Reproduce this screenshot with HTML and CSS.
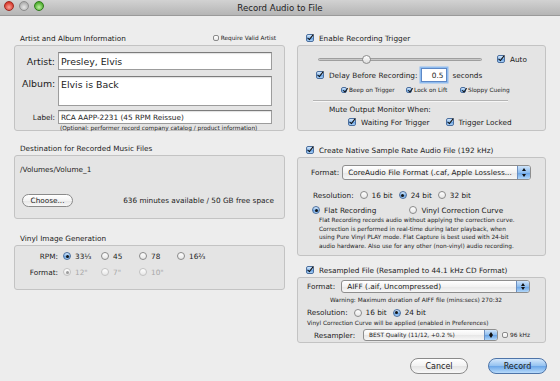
FILE: index.html
```html
<!DOCTYPE html>
<html lang="en">
<head>
    <meta charset="UTF-8">
    <meta name="viewport" content="width=device-width, initial-scale=1.0">
    <title>Record Audio to File</title>
    <link rel="stylesheet" href="styles.css">
</head>
<body>
<div class="window">
    <div class="titlebar">
        <div class="lights">
            <span class="light red"></span>
            <span class="light idle"></span>
            <span class="light green"></span>
        </div>
        <div class="title">Record Audio to File</div>
        <div></div>
    </div>

    <div class="content">
        <!-- left column -->
        <div class="column">
            <div class="group-head">
                <span>Artist and Album Information</span>
                <span class="check tiny"><span class="cb off"></span>Require Valid Artist</span>
            </div>
            <div class="box artist-box">
                <div class="field-row">
                    <span class="field-label big">Artist:</span>
                    <div class="field big">Presley, Elvis</div>
                </div>
                <div class="field-row area-row">
                    <span class="field-label big">Album:</span>
                    <div class="field big area">Elvis is Back</div>
                </div>
                <div class="field-row label-row">
                    <span class="field-label">Label:</span>
                    <div class="field small">RCA AAPP-2231 (45 RPM Reissue)</div>
                </div>
                <div class="hint">(Optional: performer record company catalog / product information)</div>
            </div>

            <div class="group-head spaced">Destination for Recorded Music Files</div>
            <div class="box dest-box">
                <div class="path">/Volumes/Volume_1</div>
                <div class="dest-row">
                    <span class="pill">Choose...</span>
                    <span>636 minutes available / 50 GB free space</span>
                </div>
            </div>

            <div class="group-head spaced-more">Vinyl Image Generation</div>
            <div class="box vinyl-box">
                <span class="row-label">RPM:</span>
                <span class="radio"><span class="rb on"></span>33⅓</span>
                <span class="radio"><span class="rb"></span>45</span>
                <span class="radio"><span class="rb"></span>78</span>
                <span class="radio"><span class="rb"></span>16⅔</span>
                <span class="row-label">Format:</span>
                <span class="radio disabled"><span class="rb dot"></span>12"</span>
                <span class="radio disabled"><span class="rb"></span>7"</span>
                <span class="radio disabled"><span class="rb"></span>10"</span>
            </div>
        </div>

        <!-- right column -->
        <div class="column">
            <div class="group-head check-head">
                <span class="check"><span class="cb"></span>Enable Recording Trigger</span>
            </div>
            <div class="box trigger-box">
                <div class="slider-row">
                    <div class="slider"><span class="knob" style="left: 29%"></span></div>
                    <span class="check auto"><span class="cb"></span>Auto</span>
                </div>
                <div class="delay-row">
                    <span class="check"><span class="cb"></span>Delay Before Recording:</span>
                    <span class="num">0.5</span>
                    <span>seconds</span>
                </div>
                <div class="tiny-checks">
                    <span class="check tiny beep"><span class="cb"></span>Beep on Trigger</span>
                    <span class="check tiny lock"><span class="cb"></span>Lock on Lift</span>
                    <span class="check tiny"><span class="cb"></span>Sloppy Cueing</span>
                </div>
                <div class="sep"></div>
                <div class="mute-title">Mute Output Monitor When:</div>
                <div class="mute-row">
                    <span class="check"><span class="cb"></span>Waiting For Trigger</span>
                    <span class="check"><span class="cb"></span>Trigger Locked</span>
                </div>
            </div>

            <div class="group-head check-head spaced-more">
                <span class="check"><span class="cb"></span>Create Native Sample Rate Audio File (192 kHz)</span>
            </div>
            <div class="box native-box">
                <div class="format-row">
                    <span>Format:</span>
                    <div class="popup wide">
                        <span class="popup-value">CoreAudio File Format (.caf, Apple Lossless...</span>
                        <span class="stepper"></span>
                    </div>
                </div>
                <div class="res-row">
                    <span>Resolution:</span>
                    <span class="radio"><span class="rb"></span>16 bit</span>
                    <span class="radio"><span class="rb on"></span>24 bit</span>
                    <span class="radio"><span class="rb"></span>32 bit</span>
                </div>
                <div class="curve-row">
                    <span class="radio"><span class="rb on"></span>Flat Recording</span>
                    <span class="radio"><span class="rb"></span>Vinyl Correction Curve</span>
                </div>
                <p class="note">
                    Flat Recording records audio without applying the correction curve.<br>
                    Correction is performed in real-time during later playback, when<br>
                    using Pure Vinyl PLAY mode. Flat Capture is best used with 24-bit<br>
                    audio hardware. Also use for any other (non-vinyl) audio recording.
                </p>
            </div>

            <div class="group-head check-head spaced-less">
                <span class="check"><span class="cb"></span>Resampled File (Resampled to 44.1 kHz CD Format)</span>
            </div>
            <div class="box resample-box">
                <div class="format-row">
                    <span>Format:</span>
                    <div class="popup wide">
                        <span class="popup-value">AIFF (.aif, Uncompressed)</span>
                        <span class="stepper"></span>
                    </div>
                </div>
                <div class="tiny-line warning">Warning: Maximum duration of AIFF file (mins:secs) 270:32</div>
                <div class="res-row">
                    <span>Resolution:</span>
                    <span class="radio"><span class="rb"></span>16 bit</span>
                    <span class="radio"><span class="rb on"></span>24 bit</span>
                </div>
                <div class="tiny-line">Vinyl Correction Curve will be applied (enabled in Preferences)</div>
                <div class="resampler-row">
                    <span>Resampler:</span>
                    <div class="popup small-popup">
                        <span class="popup-value">BEST Quality (11/12, +0.2 %)</span>
                        <span class="stepper"></span>
                    </div>
                    <span class="check tiny"><span class="cb off"></span>96 kHz</span>
                </div>
            </div>

            <div class="buttons">
                <span class="button">Cancel</span>
                <span class="button default">Record</span>
            </div>
        </div>
    </div>
</div>
</body>
</html>
```

FILE: styles.css
```css
body {
    margin: 0;
    background: #ededed;
    font-family: "DejaVu Sans", sans-serif;
    font-size: 7.3px;
    color: #1c1c1c;
}
.window {
    width: 560px;
    height: 381px;
    overflow: hidden;
}

/* title bar */
.titlebar {
    height: 15px;
    display: grid;
    grid-template-columns: 1fr auto 1fr;
    align-items: center;
    background: linear-gradient(#d2d2d2, #b5b5b5);
    border-bottom: 1px solid #9a9a9a;
}
.lights {
    display: flex;
    gap: 5px;
    margin-left: 4px;
    margin-top: -3px;
}
.light {
    width: 10px;
    height: 10px;
    border-radius: 50%;
    box-sizing: border-box;
}
.light.red {
    background: radial-gradient(circle at 50% 65%, #f7a49a, #d8392c 70%);
    border: 1px solid #9d2a22;
}
.light.idle {
    background: radial-gradient(circle at 50% 65%, #e6e6e6, #b0b0b0 70%);
    border: 1px solid #8d8d8d;
}
.light.green {
    background: radial-gradient(circle at 50% 65%, #bff0a4, #4fae2e 70%);
    border: 1px solid #2f7a1c;
}
.title {
    font-size: 8.6px;
    color: #222;
}

/* layout */
.content {
    display: grid;
    grid-template-columns: 271px 249px;
    column-gap: 12px;
    padding: 15px 14px 0 14px;
}
.column {
    display: flex;
    flex-direction: column;
}
.group-head {
    height: 14px;
    display: flex;
    align-items: center;
    justify-content: space-between;
    padding: 0 9px 0 6px;
}
.group-head.check-head {
    padding-left: 9px;
}
.spaced { margin-top: 10px; }
.spaced-more { margin-top: 12px; }
.spaced-less { margin-top: 7px; }

.box {
    box-sizing: border-box;
    background: #e4e4e4;
    border: 1px solid #c3c3c3;
    border-radius: 3px;
}

/* checks and radios */
.check, .radio {
    display: inline-flex;
    align-items: center;
    white-space: nowrap;
}
.cb {
    position: relative;
    flex: none;
    width: 8px;
    height: 8px;
    box-sizing: border-box;
    margin-right: 5px;
    border: 1px solid #4b6f9f;
    border-radius: 2px;
    background: linear-gradient(#d7e9fc, #8bbbec 50%, #5f9be0 51%, #aed4f8);
}
.cb::after {
    content: "";
    position: absolute;
    left: 2px;
    top: -2px;
    width: 2px;
    height: 6px;
    border: solid #111;
    border-width: 0 1.6px 1.6px 0;
    transform: rotate(38deg);
}
.cb.off {
    border-color: #8a8a8a;
    background: linear-gradient(#ffffff, #e9e9e9);
}
.cb.off::after {
    display: none;
}
.tiny {
    font-size: 5.8px;
}
.tiny .cb {
    width: 6px;
    height: 6px;
    margin-right: 2px;
}
.tiny .cb::after {
    left: 1.5px;
    top: -1.5px;
    width: 1.5px;
    height: 4px;
    border-width: 0 1.2px 1.2px 0;
}
.rb {
    position: relative;
    flex: none;
    width: 8px;
    height: 8px;
    box-sizing: border-box;
    margin-right: 4px;
    border: 1px solid #8a8a8a;
    border-radius: 50%;
    background: linear-gradient(#ffffff, #e6e6e6);
}
.rb.on {
    border-color: #4b6f9f;
    background: linear-gradient(#d7e9fc, #8bbbec 50%, #5f9be0 51%, #aed4f8);
}
.rb.on::after, .rb.dot::after {
    content: "";
    position: absolute;
    left: 50%;
    top: 50%;
    width: 3px;
    height: 3px;
    margin: -1.5px 0 0 -1.5px;
    border-radius: 50%;
    background: #141414;
}
.radio.disabled {
    color: #a8a8a8;
}
.radio.disabled .rb {
    border-color: #c2c2c2;
}
.radio.disabled .rb.dot::after {
    background: #9c9c9c;
}

/* artist box */
.artist-box {
    height: 86px;
    padding: 6px 12px 0 7px;
}
.field-row {
    display: flex;
    align-items: center;
}
.field-label {
    flex: none;
    width: 33px;
    margin-right: 3px;
    text-align: right;
}
.big {
    font-size: 9.4px;
}
.field {
    flex: 1;
    box-sizing: border-box;
    height: 18px;
    padding-left: 2px;
    display: flex;
    align-items: center;
    background: #fff;
    border: 1px solid #9c9c9c;
    border-top-color: #7c7c7c;
    box-shadow: inset 0 1px 1px rgba(0, 0, 0, 0.12);
}
.area-row {
    align-items: flex-start;
    margin-top: 6px;
}
.area-row .field-label {
    padding-top: 2px;
}
.field.area {
    height: 30px;
    align-items: flex-start;
    padding-top: 2px;
}
.label-row {
    margin-top: 4px;
}
.field.small {
    height: 14px;
}
.hint {
    margin: 1px 0 0 38px;
    font-size: 5.8px;
    line-height: 7px;
}

/* destination */
.dest-box {
    height: 64px;
    padding: 9px 10px 0 5px;
}
.path {
    line-height: 9px;
}
.dest-row {
    margin-top: 20px;
    display: flex;
    justify-content: space-between;
    align-items: center;
}
.pill {
    margin-left: 2px;
    width: 51px;
    height: 13px;
    box-sizing: border-box;
    display: flex;
    align-items: center;
    justify-content: center;
    border: 1px solid #8a8a8a;
    border-radius: 7px;
    background: linear-gradient(#ffffff, #f3f3f3 50%, #e5e5e5 51%, #f8f8f8);
}

/* vinyl */
.vinyl-box {
    height: 45px;
    padding-top: 4px;
    display: grid;
    grid-template-columns: 44px repeat(4, 34px);
    grid-auto-rows: 12px;
    column-gap: 4px;
    row-gap: 4px;
    align-items: center;
}
.row-label {
    text-align: right;
    padding-right: 1px;
}

/* trigger */
.trigger-box {
    height: 86px;
    padding-top: 7px;
}
.slider-row {
    height: 12px;
    display: flex;
    align-items: center;
    padding-left: 20px;
}
.slider {
    position: relative;
    width: 164px;
    height: 3px;
    box-sizing: border-box;
    border: 1px solid #9e9e9e;
    border-radius: 2px;
    background: #c8c8c8;
}
.knob {
    position: absolute;
    top: -4px;
    width: 9px;
    height: 9px;
    margin-left: -4px;
    box-sizing: border-box;
    border: 1px solid #8c8c8c;
    border-radius: 50%;
    background: linear-gradient(#ffffff, #dcdcdc);
}
.auto {
    margin-left: 15px;
}
.delay-row {
    margin-top: 3px;
    height: 14px;
    display: flex;
    align-items: center;
    padding-left: 18px;
}
.num {
    width: 26px;
    height: 14px;
    margin: 0 5px 0 4px;
    box-sizing: border-box;
    padding-right: 3px;
    display: flex;
    align-items: center;
    justify-content: flex-end;
    background: #fff;
    border: 1px solid #5d88c6;
    box-shadow: 0 0 0 1.5px #8fbcef;
}
.tiny-checks {
    margin-top: 4px;
    height: 8px;
    display: flex;
    align-items: center;
    padding-left: 43px;
}
.beep { width: 65px; }
.lock { width: 54px; }
.sep {
    margin: 6px 0 0 15px;
    width: 195px;
    border-top: 1px solid #b4b4b4;
    border-bottom: 1px solid #f6f6f6;
}
.mute-title {
    margin-top: 3px;
    line-height: 9px;
    padding-left: 31px;
}
.mute-row {
    margin-top: 3px;
    height: 10px;
    display: flex;
    align-items: center;
    gap: 16px;
    padding-left: 50px;
}

/* native file */
.native-box {
    height: 99px;
    padding: 7px 14px 0 13px;
}
.format-row {
    display: flex;
    align-items: center;
}
.format-row > span {
    margin-right: 3px;
}
.popup {
    display: flex;
    box-sizing: border-box;
    height: 15px;
    border: 1px solid #8e8e8e;
    border-radius: 3px;
    background: linear-gradient(#ffffff, #f2f2f2 50%, #e6e6e6 51%, #f7f7f7);
    overflow: hidden;
}
.popup.wide {
    flex: 1;
}
.popup-value {
    flex: 1;
    padding-left: 5px;
    display: flex;
    align-items: center;
    white-space: nowrap;
    overflow: hidden;
}
.stepper {
    position: relative;
    width: 12px;
    border-left: 1px solid #6c8fc0;
    background: linear-gradient(#cfe4fa, #8cbcee 50%, #65a1e4 51%, #b2d7f9);
}
.stepper::before, .stepper::after {
    content: "";
    position: absolute;
    left: 50%;
    margin-left: -2px;
    border-left: 2px solid transparent;
    border-right: 2px solid transparent;
}
.stepper::before {
    top: 2px;
    border-bottom: 3px solid #111;
}
.stepper::after {
    bottom: 2px;
    border-top: 3px solid #111;
}
.res-row {
    margin-top: 9px;
    height: 12px;
    display: flex;
    align-items: center;
    gap: 6px;
    padding-left: 2px;
}
.curve-row {
    margin-top: 3px;
    height: 12px;
    display: flex;
    align-items: center;
    gap: 33px;
    padding-left: 1px;
}
.note {
    margin: 0;
    padding-left: 8px;
    font-size: 5.8px;
    line-height: 8.5px;
}

/* resampled */
.resample-box {
    height: 66px;
    padding: 2px 15px 0 9px;
}
.resample-box .popup {
    height: 13px;
}
.resample-box .format-row > span {
    margin-right: 6px;
}
.tiny-line {
    font-size: 5.8px;
    line-height: 7px;
    margin-top: 2px;
}
.warning {
    margin-top: 4px;
    padding-left: 23px;
}
.resample-box .res-row {
    margin-top: 3px;
    height: 11px;
    padding-left: 0;
}
.resampler-row {
    margin-top: 2px;
    display: flex;
    align-items: center;
    padding-left: 7px;
}
.resampler-row > span:first-child {
    margin-right: 8px;
}
.popup.small-popup {
    width: 145px;
    height: 12px;
    margin-right: 4px;
}
.small-popup .popup-value {
    font-size: 5.8px;
}

/* buttons */
.buttons {
    margin-top: 15px;
    display: flex;
    justify-content: flex-end;
    gap: 20px;
    margin-right: -1px;
}
.button {
    width: 58px;
    height: 16px;
    box-sizing: border-box;
    display: flex;
    align-items: center;
    justify-content: center;
    font-size: 8px;
    border: 1px solid #8a8a8a;
    border-radius: 8px;
    background: linear-gradient(#ffffff, #f2f2f2 50%, #e4e4e4 51%, #f8f8f8);
}
.button.default {
    width: 59px;
    border-color: #4e74a8;
    background: linear-gradient(#d4e8fc, #93c1f0 50%, #6aa6e8 51%, #b8dbfb);
}
```
